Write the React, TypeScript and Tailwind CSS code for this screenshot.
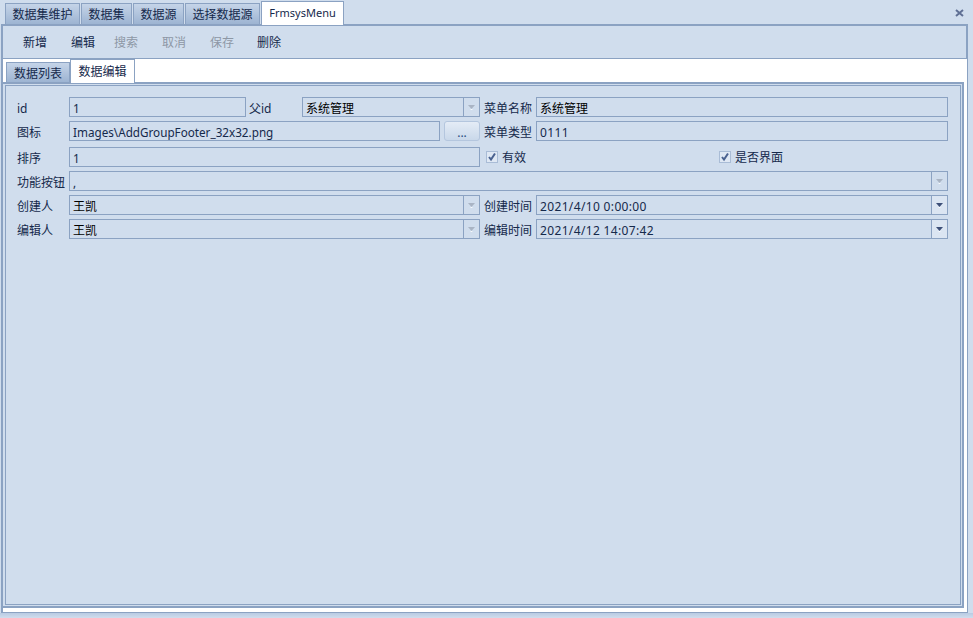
import React from "react";

const font = { fontFamily: '"Noto Sans","Noto Sans CJK SC",sans-serif' };

function TopTab({ label, width }: { label: string; width: string }) {
  return (
    <div className={`${width} h-[21px] mr-px pt-[1px] flex items-center justify-center border border-b-0 border-[#8ba2c2] bg-gradient-to-b from-[#c5d4e8] to-[#9db4d2] text-[12px] text-[#15294b]`}>
      {label}
    </div>
  );
}

function Arrow({ disabled }: { disabled?: boolean }) {
  return (
    <div className={`w-[16px] h-full shrink-0 border-l border-[#8ba2c2] flex items-center justify-center ${disabled ? "" : "bg-[#dbe5f2]"}`}>
      <svg width="7" height="5" viewBox="0 0 7 5">
        <path d="M0 0H7L3.5 4Z" fill={disabled ? "#a9b4c4" : "#3d4f78"} />
        <path d="M2 4H5L3.5 5Z" fill="#ffffff" />
      </svg>
    </div>
  );
}

function Field({ value, className = "", arrow, disabled, textClass = "text-[12px] text-[#000000]" }: { value: string; className?: string; arrow?: boolean; disabled?: boolean; textClass?: string }) {
  return (
    <div className={`h-[20px] flex items-center border border-[#8ba2c2] ${className}`}>
      <div className={`flex-1 pl-[3px] pt-[3px] leading-[15px] whitespace-nowrap overflow-hidden ${textClass}`}>{value}</div>
      {arrow && <Arrow disabled={disabled} />}
    </div>
  );
}

function Label({ text, className = "" }: { text: string; className?: string }) {
  return <div className={`text-[12px] pt-[3px] leading-[17px] text-[#15294b] whitespace-nowrap ${className}`}>{text}</div>;
}

function Check({ text, className = "" }: { text: string; className?: string }) {
  return (
    <div className={`flex items-center ${className}`}>
      <div className="w-[12px] h-[12px] border border-[#a9bcd6] bg-[#dfe8f4] flex items-center justify-center">
        <svg width="10" height="10" viewBox="0 0 10 10">
          <path d="M2 5L4 7.5L8 1.5" fill="none" stroke="#4a6290" strokeWidth="2" />
        </svg>
      </div>
      <span className="ml-[4px] pt-[1px] text-[12px] text-[#15294b]">{text}</span>
    </div>
  );
}

const latinDark = "text-[11.7px] text-[#15294b]";
const dateText = "text-[12px] tracking-[0.35px] text-[#15294b]";

export default function App() {
  return (
    <div style={font} className="w-[973px] h-[618px] overflow-hidden bg-[#d0dded] flex flex-col">
      {/* top tabs */}
      <div className="h-[24px] shrink-0 flex items-end pl-[5px] relative">
        <TopTab label="数据集维护" width="w-[75px]" />
        <TopTab label="数据集" width="w-[51px]" />
        <TopTab label="数据源" width="w-[51px]" />
        <TopTab label="选择数据源" width="w-[75px]" />
        <div className="w-[83px] h-[24px] flex items-center justify-center bg-white border border-b-0 border-[#8ba2c2] text-[11px] text-[#15294b] relative top-[1px] z-10">
          FrmsysMenu
        </div>
        <svg className="absolute left-[955px] top-[9px]" width="9" height="8" viewBox="0 0 9 8">
          <path d="M1 1L8 7M8 1L1 7" stroke="#5f6f94" strokeWidth="2" fill="none" />
        </svg>
      </div>

      {/* outer panel */}
      <div className="ml-[1px] mr-[5px] h-[589px] shrink-0 flex flex-col bg-white border-t-2 border-l-2 border-r border-b border-[#8ba2c2]">
        {/* toolbar */}
        <div className="h-[33px] shrink-0 flex items-center bg-[#d0dded] border-b border-r border-[#8ba2c2] pl-[20px] pt-[2px] text-[12px] text-[#15294b]">
          <span className="w-[48px]">新增</span>
          <span className="w-[43px]">编辑</span>
          <span className="w-[48px] text-[#8d97a5]">搜索</span>
          <span className="w-[48px] text-[#8d97a5]">取消</span>
          <span className="w-[47px] text-[#8d97a5]">保存</span>
          <span className="w-[48px]">删除</span>
        </div>
        {/* inner tabs */}
        <div className="h-[23px] shrink-0 flex items-end pl-[3px] bg-white">
          <div className="w-[64px] h-[20px] pt-[2px] flex items-center justify-center border border-b-0 border-[#8ba2c2] bg-gradient-to-b from-[#c5d4e8] to-[#9db4d2] text-[12px] text-[#15294b]">
            数据列表
          </div>
          <div className="w-[65px] h-[24px] pt-[1px] flex items-center justify-center border border-b-0 border-[#8ba2c2] bg-white text-[12px] text-[#15294b] relative top-[1px] z-10">
            数据编辑
          </div>
        </div>
        {/* page */}
        <div className="flex-1 min-h-0 mr-[3px] mb-[4px] bg-[#d0dded] border-t-2 border-r-2 border-b-2 border-[#8ba2c2] pl-[2px] pr-[1px] pt-[1px] pb-[1px]">
          <div className="h-full border border-[#8ba2c2] pt-[11px] pl-[11px] flex flex-col">
            <div className="flex h-[20px]">
              <Label text="id" className="w-[52px]" />
              <Field value="1" className="w-[177px]" textClass={latinDark} />
              <Label text="父id" className="w-[53px] ml-[3px]" />
              <Field value="系统管理" className="w-[178px]" arrow disabled />
              <Label text="菜单名称" className="w-[52px] ml-[4px]" />
              <Field value="系统管理" className="w-[412px]" />
            </div>
            <div className="flex h-[20px] mt-[4px]">
              <Label text="图标" className="w-[52px]" />
              <Field value="Images\AddGroupFooter_32x32.png" className="w-[371px]" textClass={latinDark} />
              <div className="w-[36px] h-[20px] ml-[4px] rounded-[3px] border border-[#b4c6de] bg-gradient-to-b from-[#e4ecf6] to-[#c9d8ea] flex items-center justify-center pt-[3px] text-[12px] text-[#2a4a80]">
                ...
              </div>
              <Label text="菜单类型" className="w-[52px] ml-[4px]" />
              <Field value="0111" className="w-[412px]" textClass={dateText} />
            </div>
            <div className="flex h-[20px] mt-[6px]">
              <Label text="排序" className="w-[52px]" />
              <Field value="1" className="w-[411px]" textClass={latinDark} />
              <Check text="有效" className="ml-[6px] w-[233px]" />
              <Check text="是否界面" />
            </div>
            <div className="flex h-[20px] mt-[4px]">
              <Label text="功能按钮" className="w-[52px]" />
              <Field value="," className="w-[879px]" arrow disabled textClass={latinDark} />
            </div>
            <div className="flex h-[20px] mt-[4px]">
              <Label text="创建人" className="w-[52px]" />
              <Field value="王凯" className="w-[411px]" arrow disabled />
              <Label text="创建时间" className="w-[52px] ml-[4px]" />
              <Field value="2021/4/10 0:00:00" className="w-[412px]" arrow textClass={dateText} />
            </div>
            <div className="flex h-[20px] mt-[4px]">
              <Label text="编辑人" className="w-[52px]" />
              <Field value="王凯" className="w-[411px]" arrow disabled />
              <Label text="编辑时间" className="w-[52px] ml-[4px]" />
              <Field value="2021/4/12 14:07:42" className="w-[412px]" arrow textClass={dateText} />
            </div>
          </div>
        </div>
      </div>
      <div className="flex-1 bg-gradient-to-b from-[#b9cbe3] to-[#d0dded]" />
    </div>
  );
}
